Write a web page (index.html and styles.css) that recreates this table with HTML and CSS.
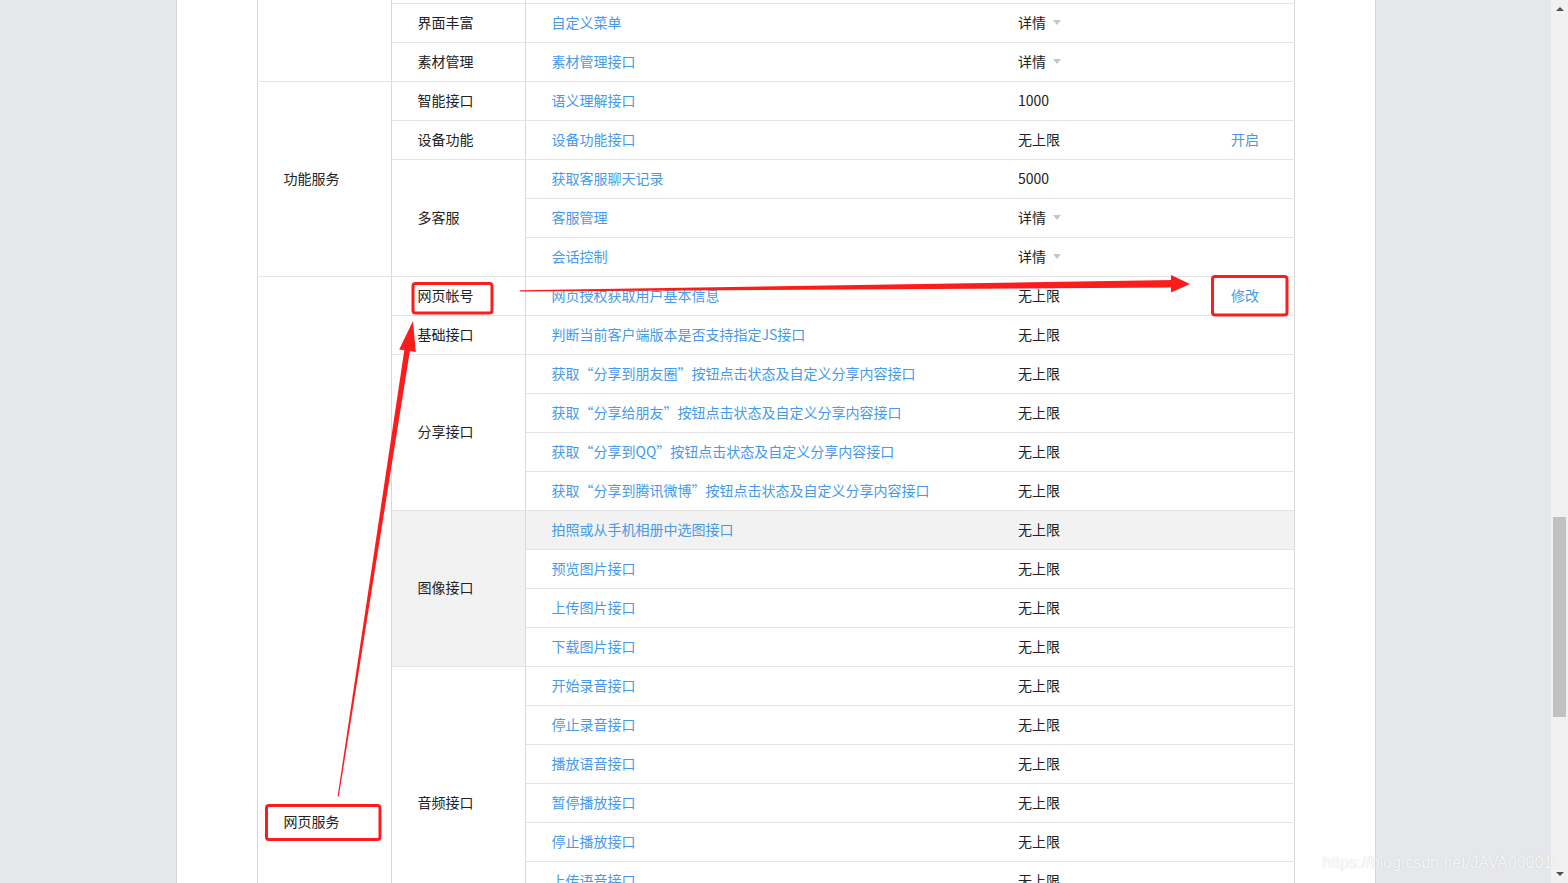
FILE: index.html
```html
<!DOCTYPE html>
<html lang="zh-CN">
<head>
<meta charset="utf-8">
<title>接口权限表</title>
<link rel="stylesheet" href="styles.css">
</head>
<body>
<div class="page">
  <div class="sheet">
    <table class="perm">
      <colgroup>
        <col class="c-cat"><col class="c-grp"><col class="c-api"><col class="c-quota"><col class="c-act">
      </colgroup>
      <tbody>
        <tr>
          <td class="cat" rowspan="5">对话服务</td>
          <td class="grp">推广支持</td>
          <td class="api"><a>生成带参数的二维码</a></td>
          <td class="quota">100000</td>
          <td class="act"></td>
        </tr>
        <tr>
          <td class="grp">用户管理</td>
          <td class="api"><a>获取用户基本信息</a></td>
          <td class="quota">500000</td>
          <td class="act"></td>
        </tr>
        <tr>
          <td class="grp">推广支持</td>
          <td class="api"><a>长链接转短链接接口</a></td>
          <td class="quota">1000</td>
          <td class="act"></td>
        </tr>
        <tr>
          <td class="grp">界面丰富</td>
          <td class="api"><a>自定义菜单</a></td>
          <td class="quota"><span class="more">详情</span></td>
          <td class="act"></td>
        </tr>
        <tr>
          <td class="grp">素材管理</td>
          <td class="api"><a>素材管理接口</a></td>
          <td class="quota"><span class="more">详情</span></td>
          <td class="act"></td>
        </tr>

        <tr>
          <td class="cat" rowspan="5">功能服务</td>
          <td class="grp">智能接口</td>
          <td class="api"><a>语义理解接口</a></td>
          <td class="quota">1000</td>
          <td class="act"></td>
        </tr>
        <tr>
          <td class="grp">设备功能</td>
          <td class="api"><a>设备功能接口</a></td>
          <td class="quota">无上限</td>
          <td class="act"><a>开启</a></td>
        </tr>
        <tr>
          <td class="grp" rowspan="3">多客服</td>
          <td class="api"><a>获取客服聊天记录</a></td>
          <td class="quota">5000</td>
          <td class="act"></td>
        </tr>
        <tr>
          <td class="api"><a>客服管理</a></td>
          <td class="quota"><span class="more">详情</span></td>
          <td class="act"></td>
        </tr>
        <tr>
          <td class="api"><a>会话控制</a></td>
          <td class="quota"><span class="more">详情</span></td>
          <td class="act"></td>
        </tr>

        <tr>
          <td class="cat" rowspan="28">网页服务</td>
          <td class="grp">网页帐号</td>
          <td class="api"><a>网页授权获取用户基本信息</a></td>
          <td class="quota">无上限</td>
          <td class="act"><a>修改</a></td>
        </tr>
        <tr>
          <td class="grp">基础接口</td>
          <td class="api"><a>判断当前客户端版本是否支持指定JS接口</a></td>
          <td class="quota">无上限</td>
          <td class="act"></td>
        </tr>
        <tr>
          <td class="grp" rowspan="4">分享接口</td>
          <td class="api"><a>获取“分享到朋友圈”按钮点击状态及自定义分享内容接口</a></td>
          <td class="quota">无上限</td>
          <td class="act"></td>
        </tr>
        <tr>
          <td class="api"><a>获取“分享给朋友”按钮点击状态及自定义分享内容接口</a></td>
          <td class="quota">无上限</td>
          <td class="act"></td>
        </tr>
        <tr>
          <td class="api"><a>获取“分享到QQ”按钮点击状态及自定义分享内容接口</a></td>
          <td class="quota">无上限</td>
          <td class="act"></td>
        </tr>
        <tr>
          <td class="api"><a>获取“分享到腾讯微博”按钮点击状态及自定义分享内容接口</a></td>
          <td class="quota">无上限</td>
          <td class="act"></td>
        </tr>
        <tr class="hover">
          <td class="grp hl" rowspan="4">图像接口</td>
          <td class="api hl"><a>拍照或从手机相册中选图接口</a></td>
          <td class="quota hl">无上限</td>
          <td class="act hl"></td>
        </tr>
        <tr>
          <td class="api"><a>预览图片接口</a></td>
          <td class="quota">无上限</td>
          <td class="act"></td>
        </tr>
        <tr>
          <td class="api"><a>上传图片接口</a></td>
          <td class="quota">无上限</td>
          <td class="act"></td>
        </tr>
        <tr>
          <td class="api"><a>下载图片接口</a></td>
          <td class="quota">无上限</td>
          <td class="act"></td>
        </tr>
        <tr>
          <td class="grp" rowspan="7">音频接口</td>
          <td class="api"><a>开始录音接口</a></td>
          <td class="quota">无上限</td>
          <td class="act"></td>
        </tr>
        <tr>
          <td class="api"><a>停止录音接口</a></td>
          <td class="quota">无上限</td>
          <td class="act"></td>
        </tr>
        <tr>
          <td class="api"><a>播放语音接口</a></td>
          <td class="quota">无上限</td>
          <td class="act"></td>
        </tr>
        <tr>
          <td class="api"><a>暂停播放接口</a></td>
          <td class="quota">无上限</td>
          <td class="act"></td>
        </tr>
        <tr>
          <td class="api"><a>停止播放接口</a></td>
          <td class="quota">无上限</td>
          <td class="act"></td>
        </tr>
        <tr>
          <td class="api"><a>上传语音接口</a></td>
          <td class="quota">无上限</td>
          <td class="act"></td>
        </tr>
        <tr>
          <td class="api"><a>下载语音接口</a></td>
          <td class="quota">无上限</td>
          <td class="act"></td>
        </tr>
        <tr>
          <td class="grp">智能接口</td>
          <td class="api"><a>识别音频并返回识别结果接口</a></td>
          <td class="quota">无上限</td>
          <td class="act"></td>
        </tr>
        <tr>
          <td class="grp">设备信息</td>
          <td class="api"><a>获取网络状态接口</a></td>
          <td class="quota">无上限</td>
          <td class="act"></td>
        </tr>
        <tr>
          <td class="grp" rowspan="2">地理位置</td>
          <td class="api"><a>使用微信内置地图查看位置接口</a></td>
          <td class="quota">无上限</td>
          <td class="act"></td>
        </tr>
        <tr>
          <td class="api"><a>获取地理位置接口</a></td>
          <td class="quota">无上限</td>
          <td class="act"></td>
        </tr>
        <tr>
          <td class="grp" rowspan="7">界面操作</td>
          <td class="api"><a>隐藏右上角菜单接口</a></td>
          <td class="quota">无上限</td>
          <td class="act"></td>
        </tr>
        <tr>
          <td class="api"><a>显示右上角菜单接口</a></td>
          <td class="quota">无上限</td>
          <td class="act"></td>
        </tr>
        <tr>
          <td class="api"><a>关闭当前网页窗口接口</a></td>
          <td class="quota">无上限</td>
          <td class="act"></td>
        </tr>
        <tr>
          <td class="api"><a>批量隐藏功能按钮接口</a></td>
          <td class="quota">无上限</td>
          <td class="act"></td>
        </tr>
        <tr>
          <td class="api"><a>批量显示功能按钮接口</a></td>
          <td class="quota">无上限</td>
          <td class="act"></td>
        </tr>
        <tr>
          <td class="api"><a>隐藏所有非基础按钮接口</a></td>
          <td class="quota">无上限</td>
          <td class="act"></td>
        </tr>
        <tr>
          <td class="api"><a>显示所有功能按钮接口</a></td>
          <td class="quota">无上限</td>
          <td class="act"></td>
        </tr>
      </tbody>
    </table>
  </div>
</div>
<div class="scrollbar">
  <span class="sb-up"></span>
  <span class="sb-thumb"></span>
  <span class="sb-fill"></span>
  <span class="sb-down"></span>
</div>

<svg class="marks" width="1568" height="883" viewBox="0 0 1568 883" xmlns="http://www.w3.org/2000/svg">
  <g fill="none" stroke="#fb1c1c" stroke-width="3">
    <rect x="413" y="283.5" width="79" height="29.5" rx="2.5"/>
    <rect x="1212.5" y="276.5" width="74.5" height="38.5" rx="2.5"/>
    <rect x="266.5" y="805.5" width="113.5" height="34" rx="2.5"/>
  </g>
  <g fill="#fb1c1c">
    <polygon points="520,290.2 1173,280 1173,287.5 520,291.6"/>
    <polygon points="1171,275 1190,284 1171,292.5"/>
    <polygon points="337.6,796.5 338.8,796.5 410.2,349 404.6,348.2"/>
    <polygon points="413,321 415.8,352 399.2,349.5"/>
  </g>
</svg>
<div class="watermark">https://blog.csdn.net/JAVA000011</div>
</body>
</html>
```
FILE: styles.css
```css
html, body {
  margin: 0;
  padding: 0;
  height: 883px;
  overflow: hidden;
}
body {
  display: flex;
  background: #e6e7eb;
  font-family: "Noto Sans CJK SC", "Microsoft YaHei", sans-serif;
  font-size: 14px;
  color: #222;
  position: relative;
}
.page {
  flex: 1;
  overflow: hidden;
}
.sheet {
  width: 1038px;
  margin: 0 auto;
  padding: 0 80px;
  height: 883px;
  background: #fff;
  border-left: 1px solid #d6d7da;
  border-right: 1px solid #d6d7da;
  overflow: hidden;
}
.perm {
  table-layout: fixed;
  border-collapse: collapse;
  width: 1037px;
  margin-top: -114px;
}
.c-cat { width: 134px; }
.c-grp { width: 134px; }
.c-api { width: 467px; }
.c-quota { width: 213px; }
.c-act { width: 89px; }
.perm tr { height: 39px; }
.perm td {
  padding: 0 0 2px 26px;
  border-bottom: 1px solid #e4e4e4;
  vertical-align: middle;
  white-space: nowrap;
  line-height: 20px;
}
.perm td.cat {
  padding-left: 26px;
  border-left: 1px solid #d9d9d9;
  border-right: 1px solid #d9d9d9;
}
.perm td.grp {
  border-right: 1px solid #d9d9d9;
}
.perm td.act {
  border-right: 1px solid #d9d9d9;
}
.perm td.hl {
  background: #f2f2f2;
}
.perm a {
  color: #459ae9;
  text-decoration: none;
}
.more::after {
  content: "";
  display: inline-block;
  margin-left: 7px;
  vertical-align: 3px;
  border-left: 4.5px solid transparent;
  border-right: 4.5px solid transparent;
  border-top: 5px solid #c6c6c6;
}
.scrollbar {
  width: 17px;
  flex: none;
  background: #f1f1f1;
  display: flex;
  flex-direction: column;
  align-items: center;
}
.sb-up {
  margin-top: 7px;
  border-left: 4px solid transparent;
  border-right: 4px solid transparent;
  border-bottom: 4px solid #505050;
}
.sb-thumb {
  margin-top: 506px;
  width: 13px;
  height: 200px;
  background: #c1c1c1;
}
.sb-fill {
  flex: 1;
}
.sb-down {
  margin-bottom: 7px;
  border-left: 4px solid transparent;
  border-right: 4px solid transparent;
  border-top: 4px solid #505050;
}
.marks {
  position: absolute;
  left: 0;
  top: 0;
  pointer-events: none;
}
.watermark {
  position: absolute;
  right: 8px;
  top: 854px;
  font-family: "Liberation Sans", Arial, sans-serif;
  font-size: 16px;
  color: rgba(255, 255, 255, 0.9);
  text-shadow: 0 0 1px rgba(0, 0, 0, 0.2);
}
```
